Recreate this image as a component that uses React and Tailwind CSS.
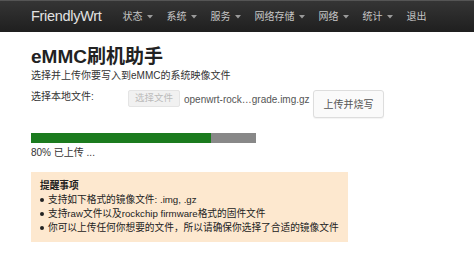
const font = { fontFamily: '"Liberation Sans", "Noto Sans CJK SC", sans-serif' }

function Caret() {
  return (
    <svg width="6" height="4" viewBox="0 0 6 4" className="ml-[4px] mt-[1px]">
      <path d="M0 0 L6 0 L3 3.5 Z" fill="#9a9a9a" />
    </svg>
  )
}

const menu = [
  { label: '状态', caret: true },
  { label: '系统', caret: true },
  { label: '服务', caret: true },
  { label: '网络存储', caret: true },
  { label: '网络', caret: true },
  { label: '统计', caret: true },
  { label: '退出', caret: false },
]

export default function App() {
  return (
    <div className="w-[474px] h-[265px] bg-white overflow-hidden text-[#333]" style={font}>
      {/* Nav */}
      <nav className="h-[32px] border-t border-[#555] bg-gradient-to-b from-[#353535] to-[#1f1f1f] flex items-center pl-[31px]">
        <span className="text-[14.5px] text-[#e2e2e2] tracking-[-0.3px] mr-[21px]">FriendlyWrt</span>
        <div className="flex items-center gap-[14px]">
          {menu.map((m) => (
            <div key={m.label} className="flex items-center text-[10px] leading-none text-[#c6c6c6]">
              {m.label}
              {m.caret && <Caret />}
            </div>
          ))}
        </div>
      </nav>

      <div className="pl-[31px]">
        <h1 className="mt-[13px] text-[19px] leading-[24px] font-bold text-[#222]">eMMC刷机助手</h1>
        <p className="text-[10px] leading-[14px] text-[#333]">选择并上传你要写入到eMMC的系统映像文件</p>

        {/* File row */}
        <div className="mt-[7px] flex items-start">
          <span className="text-[10px] leading-[14px] w-[97px]">选择本地文件:</span>
          <span className="h-[17px] w-[52px] flex items-center justify-center text-[9.5px] text-[#bbb] bg-[#f1f1f1] border border-[#e4e4e4] rounded-[2px]">
            选择文件
          </span>
          <span className="ml-[4px] mt-[3px] text-[10px] leading-[14px] text-[#555] w-[129px] whitespace-nowrap">openwrt-rock…grade.img.gz</span>
          <button className="h-[28px] w-[71px] text-[10px] text-[#555] bg-[#fafafa] border border-[#ddd] rounded-[3px] shadow-[0_1px_1px_rgba(0,0,0,0.05)]">
            上传并烧写
          </button>
        </div>

        {/* Progress */}
        <div className="mt-[15px] w-[225px] h-[10px] bg-[#888] flex">
          <div className="h-full bg-[#1b7b1e]" style={{ width: '80%' }} />
        </div>
        <p className="mt-[3px] text-[10px] leading-[14px] text-[#333]">80% 已上传 ...</p>

        {/* Notice */}
        <div className="mt-[12px] w-[317px] bg-[#fde8cf] px-[9px] pt-[7px] pb-[7px] text-[9.7px] leading-[14px] text-[#222]">
          <div className="font-bold">提醒事项</div>
          {[
            '支持如下格式的镜像文件: .img, .gz',
            '支持raw文件以及rockchip firmware格式的固件文件',
            '你可以上传任何你想要的文件，所以请确保你选择了合适的镜像文件',
          ].map((t) => (
            <div key={t} className="flex items-center">
              <span className="w-[4px] h-[4px] rounded-full bg-[#222] mr-[4px] shrink-0" />
              <span className="whitespace-nowrap">{t}</span>
            </div>
          ))}
        </div>
      </div>
    </div>
  )
}
